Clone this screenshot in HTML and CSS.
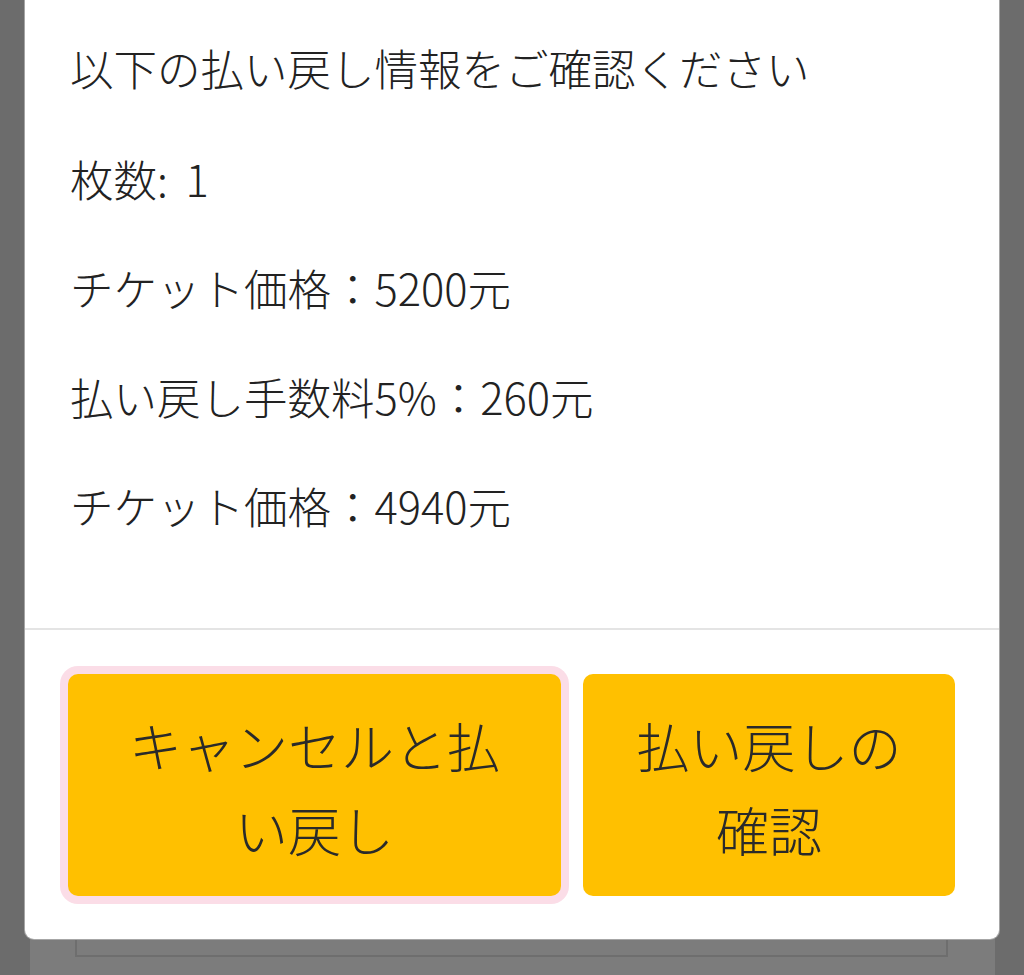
FILE: index.html
```html
<!DOCTYPE html>
<html lang="ja">
<head>
<meta charset="utf-8">
<title>払い戻し</title>
<link rel="stylesheet" href="styles.css">
</head>
<body>
<div class="page">
  <div class="page-box"></div>
</div>
<div class="modal">
  <div class="modal-body">
    <p class="line title">以下の払い戻し情報をご確認ください</p>
    <p class="line">枚数: <span class="num">1</span></p>
    <p class="line">チケット価格：5200元</p>
    <p class="line">払い戻し手数料5%：260元</p>
    <p class="line">チケット価格：4940元</p>
  </div>
  <div class="modal-footer">
    <button class="btn btn-cancel">キャンセルと払い戻し</button>
    <button class="btn btn-confirm">払い戻しの確認</button>
  </div>
</div>
</body>
</html>
```

FILE: styles.css
```css
html, body {
  margin: 0;
  padding: 0;
}
body {
  width: 1024px;
  height: 975px;
  overflow: hidden;
  background: #6c6c6c;
  font-family: "Noto Sans CJK JP", "Noto Sans", sans-serif;
  color: #222;
  position: relative;
}
.page {
  margin-left: 30px;
  width: 965px;
  height: 975px;
  background: #7c7c7c;
  padding-left: 45px;
  box-sizing: border-box;
}
.page-box {
  width: 873px;
  height: 957px;
  border: 2px solid #6e6e6e;
  border-top: none;
  box-sizing: border-box;
}
.modal {
  position: absolute;
  top: 0;
  left: 24px;
  width: 976px;
  height: 940px;
  box-sizing: border-box;
  background: #fff;
  border: 1px solid rgba(0, 0, 0, 0.35);
  border-top: none;
  border-radius: 0 0 10px 10px;
  display: flex;
  flex-direction: column;
}
.modal-body {
  padding: 35px 46px 0 45px;
  height: 628px;
  box-sizing: border-box;
}
.line {
  margin: 0 0 44px 0;
  font-size: 43.5px;
  font-weight: 300;
  line-height: 65px;
  white-space: nowrap;
}
.line.title {
  margin-bottom: 46px;
}
.num {
  margin-left: 8px;
}
.modal-footer {
  border-top: 2px solid #e4e4e4;
  padding: 44px 44px 0 43px;
  display: flex;
  gap: 22px;
}
.btn {
  height: 222px;
  border: none;
  border-radius: 10px;
  background: #ffc000;
  color: #2a2a2a;
  font-family: "Noto Sans CJK JP", "Noto Sans", sans-serif;
  font-size: 53px;
  font-weight: 300;
  line-height: 84px;
  padding: 4px 40px 0 40px;
  text-align: center;
}
.btn-cancel {
  width: 493px;
  box-shadow: 0 0 0 8px #fbdde7;
}
.btn-confirm {
  width: 372px;
}
```
